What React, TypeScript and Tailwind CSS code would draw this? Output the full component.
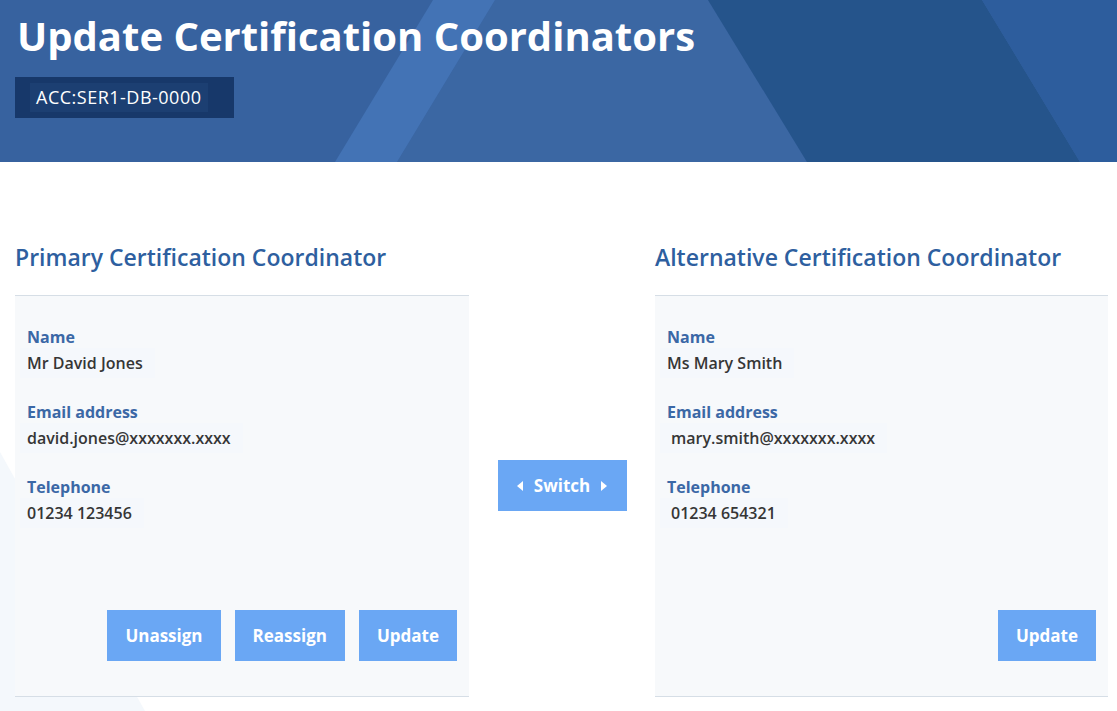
import { ReactNode } from 'react'

const FONT = { fontFamily: '"Open Sans", Lato, "Liberation Sans", sans-serif' }

type Field = { label: string; value: string; indent?: boolean }

function HeaderArt() {
  return (
    <svg className="absolute inset-0 h-full w-full" viewBox="0 0 1117 162" preserveAspectRatio="none">
      <rect x="0" y="0" width="1117" height="162" fill="#37629f" />
      <polygon points="495,0 708,0 807,162 397,162" fill="#3b67a3" />
      <polygon points="433,0 495,0 397,162 335,162" fill="#4373b5" />
      <polygon points="708,0 982,0 1080,162 807,162" fill="#25548b" />
      <polygon points="982,0 1117,0 1117,162 1080,162" fill="#2d5d9d" />
    </svg>
  )
}

function Btn({ children }: { children: ReactNode }) {
  return (
    <button className="flex h-[51px] items-center justify-center bg-[#6aa7f4] px-[18px] text-[17px] font-bold text-white">
      {children}
    </button>
  )
}

function Panel({ title, fields, buttons }: { title: string; fields: Field[]; buttons: string[] }) {
  return (
    <div>
      <h2 className="h-[30px] text-[23px] font-semibold leading-[30px] text-[#2e5f9f]">{title}</h2>
      <div className="mt-[23px] flex h-[402px] flex-col border-y border-[#d6dee6] bg-[#f7f9fb] pl-[5px] pr-[12px] pt-[30px]">
        {fields.map(f => (
          <div key={f.label} className="mb-[23px]">
            <div className="pl-[7px] text-[16px] font-bold leading-[22px] text-[#3b68a6]">{f.label}</div>
            <div className={`inline-block bg-[#f5f8fc] pr-[12px] text-[16px] font-semibold leading-[30px] text-[#363636] ${f.indent ? 'pl-[11px]' : 'pl-[7px]'}`}>
              {f.value}
            </div>
          </div>
        ))}
        <div className="mb-[35px] mt-auto flex justify-end gap-[14px]">
          {buttons.map(b => (
            <Btn key={b}>{b}</Btn>
          ))}
        </div>
      </div>
    </div>
  )
}

export default function App() {
  return (
    <div className="relative h-[711px] w-[1117px] overflow-hidden bg-white" style={FONT}>
      <svg className="absolute left-0 top-[162px] h-[549px] w-[300px]" viewBox="0 0 300 549">
        <polygon points="0,290 0,549 145,549" fill="#f4f8fc" />
      </svg>

      <header className="relative h-[162px] px-[17px] pt-[10px]">
        <HeaderArt />
        <div className="relative">
          <h1 className="text-[40px] font-bold leading-[52px] text-white">Update Certification Coordinators</h1>
          <div className="ml-[-2px] mt-[15px] flex h-[41px] w-[219px] items-center bg-[#17386a] pl-[15px]">
            <span className="bg-[#1c3f72] px-[6px] text-[18px] leading-[29px] tracking-[0.5px] text-white">ACC:SER1-DB-0000</span>
          </div>
        </div>
      </header>

      <main className="relative grid grid-cols-[454px_186px_453px] pl-[15px] pt-[80px]">
        <Panel
          title="Primary Certification Coordinator"
          fields={[
            { label: 'Name', value: 'Mr David Jones' },
            { label: 'Email address', value: 'david.jones@xxxxxxx.xxxx' },
            { label: 'Telephone', value: '01234 123456' },
          ]}
          buttons={['Unassign', 'Reassign', 'Update']}
        />
        <div className="flex justify-center pt-[218px]">
          <button className="flex h-[51px] w-[129px] items-center justify-center gap-[10px] bg-[#6aa7f4] text-[17px] font-bold text-white">
            <svg width="7" height="10" viewBox="0 0 7 10"><polygon points="6,0 6,10 0,5" fill="white" /></svg>
            Switch
            <svg width="7" height="10" viewBox="0 0 7 10"><polygon points="1,0 1,10 7,5" fill="white" /></svg>
          </button>
        </div>
        <Panel
          title="Alternative Certification Coordinator"
          fields={[
            { label: 'Name', value: 'Ms Mary Smith' },
            { label: 'Email address', value: 'mary.smith@xxxxxxx.xxxx', indent: true },
            { label: 'Telephone', value: '01234 654321', indent: true },
          ]}
          buttons={['Update']}
        />
      </main>
    </div>
  )
}
